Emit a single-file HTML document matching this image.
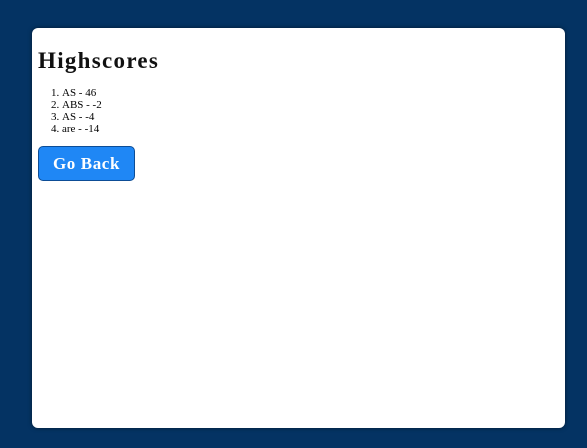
<!DOCTYPE html>
<html><head><style>
html,body{margin:0;padding:0;width:587px;height:448px;background:#043363;overflow:hidden}
.card{position:absolute;left:32px;top:28px;width:533px;height:400px;background:#fff;border-radius:6px;box-shadow:0 0 4px rgba(0,0,0,.5)}
h1{position:absolute;left:6px;top:20px;margin:0;font:bold 23px "Liberation Serif",serif;letter-spacing:1.3px;color:#111}
ol{position:absolute;left:-3px;top:59px;margin:0;padding-left:33px;font:11px/12px "Liberation Serif",serif;color:#000}
.btn{position:absolute;left:6px;top:118px;width:97px;height:35px;box-sizing:border-box;background:#1f87f5;border:1px solid #0d4d96;border-radius:5px;color:#fff;font:bold 17px "Liberation Serif",serif;letter-spacing:0.6px;text-align:center;line-height:33px}
</style></head><body>
<div class="card">
<h1>Highscores</h1>
<ol><li>AS - 46</li><li>ABS - -2</li><li>AS - -4</li><li>are - -14</li></ol>
<div class="btn">Go Back</div>
</div>
</body></html>
